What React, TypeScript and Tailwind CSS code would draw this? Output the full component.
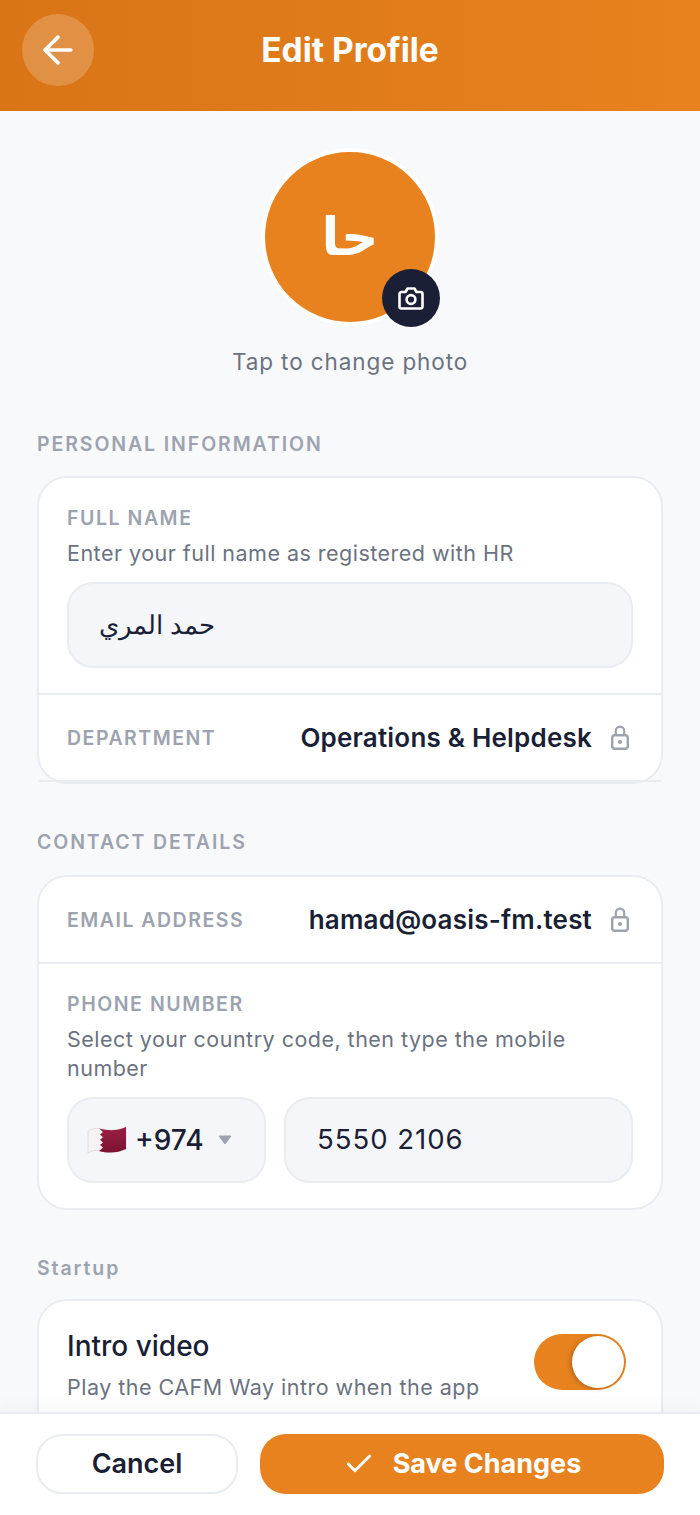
import { ArrowLeft, Check } from "lucide-react";

function LockIcon() {
  return (
    <svg width="18" height="25" viewBox="0 0 18 25" fill="none" className="shrink-0 text-[#9ca3af]">
      <rect x="1.2" y="10.2" width="15.6" height="13.6" rx="2.5" stroke="currentColor" strokeWidth="2.4" />
      <path d="M4.8 10V5.8a4.2 4.2 0 0 1 8.4 0V10" stroke="currentColor" strokeWidth="2.2" />
      <circle cx="9" cy="17" r="2.1" fill="currentColor" />
    </svg>
  );
}

function CameraIcon() {
  return (
    <svg width="26" height="23" viewBox="0 0 26 23" fill="none" stroke="currentColor" strokeWidth="2.6" strokeLinejoin="round">
      <path d="M1.5 7a2 2 0 0 1 2-2H7.5l2-3.5h7l2 3.5h4a2 2 0 0 1 2 2v12.5a2 2 0 0 1-2 2h-19a2 2 0 0 1-2-2z" />
      <circle cx="13" cy="12.5" r="4.4" />
    </svg>
  );
}

function QatarFlag() {
  return (
    <svg width="40" height="28" viewBox="0 0 40 28" className="shrink-0">
      <defs>
        <linearGradient id="maroon" x1="0" y1="0" x2="0" y2="1">
          <stop offset="0" stopColor="#9a1f45" />
          <stop offset="1" stopColor="#7c1230" />
        </linearGradient>
      </defs>
      <path d="M1 5C6 2 10 2 14 3C22 5 30 5 39 1V23C30 27 22 27 14 25C10 24 6 24 1 27Z" fill="#f6f3f4" stroke="#d9d6d8" strokeWidth="0.8" />
      <path
        d="M12 2.6L16 6L13 8.6L16 11.2L13 13.8L16 16.4L13 19L16 21.6L12 25C22 27.5 30 27 39 23V1C30 5 22 5 12 2.6Z"
        fill="url(#maroon)"
      />
    </svg>
  );
}

function SectionLabel({ children }: { children: React.ReactNode }) {
  return (
    <h2 className="px-[37px] text-[19.5px] leading-[24px] font-semibold tracking-[1.9px] text-[#9ca3af]">
      {children}
    </h2>
  );
}

function LockedRow({ label, value, className }: { label: string; value: string; className: string }) {
  return (
    <div className={`flex items-center justify-between pl-[28px] pr-[32px] ${className}`}>
      <span className="mt-[2px] text-[19.5px] font-semibold tracking-[1.5px] text-[#9ca3af]">{label}</span>
      <div className="flex items-center gap-[19px]">
        <span className="text-[26px] font-semibold tracking-[0.2px] text-[#1a1f36]">{value}</span>
        <LockIcon />
      </div>
    </div>
  );
}

export default function App() {
  return (
    <div className="flex h-[1515px] w-[700px] flex-col overflow-hidden bg-[#f8f9fb] font-['Inter',sans-serif]">
      <header className="relative flex h-[111px] shrink-0 items-center justify-center bg-gradient-to-r from-[#d97516] to-[#e8821f]">
        <button
          type="button"
          className="absolute left-[22px] top-[14px] flex h-[72px] w-[72px] items-center justify-center rounded-full bg-white/20 text-white"
        >
          <ArrowLeft size={44} strokeWidth={2} />
        </button>
        <h1 className="pb-[11px] text-[33.5px] font-bold text-white">Edit Profile</h1>
      </header>

      <main className="min-h-0 flex-1 overflow-hidden">
        <div className="flex flex-col items-center pt-[37px]">
          <div className="relative h-[178px] w-[178px]">
            <div className="flex h-full w-full items-center justify-center rounded-full border-[4px] border-white bg-[#e8821f] font-['DejaVu_Sans'] text-[52px] font-bold text-white">
              حا
            </div>
            <div className="absolute bottom-[-1px] right-[-1px] flex h-[58px] w-[58px] items-center justify-center rounded-full bg-[#1a1f36] text-white">
              <CameraIcon />
            </div>
          </div>
          <p className="mt-[21px] text-[22.5px] leading-[30px] tracking-[0.9px] text-[#6b7280]">Tap to change photo</p>
        </div>

        <div className="mt-[55px]">
          <SectionLabel>PERSONAL INFORMATION</SectionLabel>
          <section className="mx-[37px] mt-[20px] rounded-[30px] border-2 border-[#e9ecf1] bg-white">
            <div className="border-b-2 border-[#e9ecf1] px-[28px] pb-[25px] pt-[28px]">
              <label className="block text-[19.5px] leading-[24px] font-semibold tracking-[1.55px] text-[#9ca3af]">
                FULL NAME
              </label>
              <p className="mt-[10px] text-[21.5px] leading-[26px] tracking-[0.48px] text-[#6b7280]">
                Enter your full name as registered with HR
              </p>
              <div className="mt-[16px] flex h-[86px] items-center rounded-[26px] border-2 border-[#e9ecf1] bg-[#f5f6fa] px-[30px] text-[25.5px] text-[#1a1f36]">
                حمد المري
              </div>
            </div>
            <LockedRow label="DEPARTMENT" value="Operations & Helpdesk" className="h-[87px] border-b-2 border-[#e9ecf1]" />
          </section>
        </div>

        <div className="mt-[46px]">
          <SectionLabel>CONTACT DETAILS</SectionLabel>
          <section className="mx-[37px] mt-[21px] rounded-[30px] border-2 border-[#e9ecf1] bg-white">
            <LockedRow label="EMAIL ADDRESS" value="hamad@oasis-fm.test" className="h-[87px] border-b-2 border-[#e9ecf1]" />
            <div className="px-[28px] pb-[25px] pt-[28px]">
              <label className="block text-[19.5px] leading-[24px] font-semibold tracking-[1.55px] text-[#9ca3af]">
                PHONE NUMBER
              </label>
              <p className="mt-[9px] text-[21.5px] leading-[29px] tracking-[0.48px] text-[#6b7280]">
                Select your country code, then type the mobile number
              </p>
              <div className="mt-[14px] flex gap-[18px]">
                <div className="flex h-[86px] w-[199px] shrink-0 items-center rounded-[26px] border-2 border-[#e9ecf1] bg-[#f5f6fa] pl-[18px]">
                  <QatarFlag />
                  <span className="ml-[8px] text-[28px] font-medium text-[#1a1f36]">+974</span>
                  <svg width="14" height="10" viewBox="0 0 14 10" className="ml-[14px] text-[#9ca3af]">
                    <path d="M1 1H13L7 9Z" fill="currentColor" stroke="currentColor" strokeLinejoin="round" />
                  </svg>
                </div>
                <div className="flex h-[86px] min-w-0 flex-1 items-center rounded-[26px] border-2 border-[#e9ecf1] bg-[#f5f6fa] px-[31px] text-[27.5px] tracking-[1px] text-[#1a1f36]">
                  5550 2106
                </div>
              </div>
            </div>
          </section>
        </div>

        <div className="mt-[46px]">
          <SectionLabel>Startup</SectionLabel>
          <section className="mx-[37px] mt-[19px] rounded-[30px] border-2 border-[#e9ecf1] bg-white px-[28px] pb-[70px] pt-[29px]">
            <div className="flex items-start justify-between gap-[20px]">
              <div>
                <p className="text-[28px] leading-[32px] font-medium text-[#1a1f36]">Intro video</p>
                <p className="mt-[11px] text-[21.5px] leading-[29px] tracking-[0.48px] text-[#6b7280]">
                  Play the CAFM Way intro when the app
                </p>
              </div>
              <div className="mr-[7px] mt-[4px] flex h-[56px] w-[92px] shrink-0 items-center justify-end rounded-full bg-[#e8821f] pr-[2px]">
                <span className="h-[52px] w-[52px] rounded-full bg-white shadow-[-2px_1px_4px_rgba(0,0,0,0.2)]" />
              </div>
            </div>
          </section>
        </div>
      </main>

      <footer className="z-10 flex h-[103px] shrink-0 gap-[22px] border-t-2 border-[#e9ecf1] bg-white px-[36px] pt-[20px] shadow-[0_-6px_16px_rgba(0,0,0,0.03)]">
        <button
          type="button"
          className="h-[60px] w-[202px] shrink-0 rounded-[26px] border-2 border-[#e9ecf1] bg-white text-[27px] font-semibold text-[#1a1f36]"
        >
          Cancel
        </button>
        <button
          type="button"
          className="flex h-[60px] flex-1 items-center justify-center gap-[18px] rounded-[26px] bg-[#e8821f] text-[27px] font-bold text-white"
        >
          <Check size={32} strokeWidth={2.2} />
          Save Changes
        </button>
      </footer>
    </div>
  );
}
